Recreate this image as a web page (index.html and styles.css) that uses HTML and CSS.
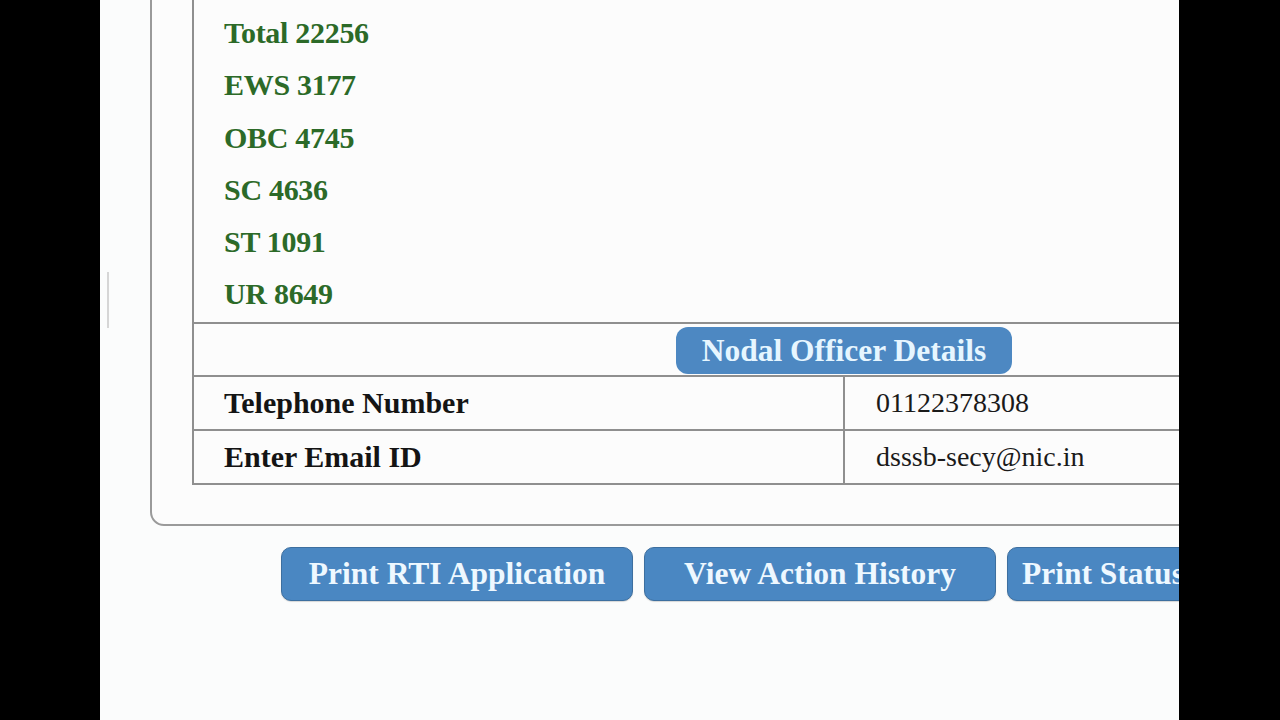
FILE: index.html
```html
<!DOCTYPE html>
<html>
<head>
<meta charset="utf-8">
<link rel="stylesheet" href="styles.css">
</head>
<body>
<div class="screen">
  <div class="bar-black"></div>
  <div class="page">
    <div class="artifact"></div>
    <div class="card">
      <table class="grid">
        <tr>
          <td colspan="2" class="vacancy">
            <ul class="counts">
              <li>Total 22256</li>
              <li>EWS 3177</li>
              <li>OBC 4745</li>
              <li>SC 4636</li>
              <li>ST 1091</li>
              <li>UR 8649</li>
            </ul>
          </td>
        </tr>
        <tr>
          <td colspan="2" class="head-cell"><span class="badge">Nodal Officer Details</span></td>
        </tr>
        <tr>
          <td class="label">Telephone Number</td>
          <td class="value">01122378308</td>
        </tr>
        <tr>
          <td class="label">Enter Email ID</td>
          <td class="value">dsssb-secy@nic.in</td>
        </tr>
      </table>
    </div>
    <div class="actions">
      <button class="btn">Print RTI Application</button>
      <button class="btn">View Action History</button>
      <button class="btn">Print Status</button>
    </div>
  </div>
  <div class="bar-black"></div>
</div>
</body>
</html>
```
FILE: styles.css
```css
html, body {
  margin: 0;
  padding: 0;
  background: #000;
}
.screen {
  display: flex;
  width: 1280px;
  height: 720px;
  overflow: hidden;
}
.bar-black {
  width: 100px;
  flex: none;
  background: #000;
}
.bar-black:last-child {
  width: 101px;
}
.page {
  position: relative;
  width: 1079px;
  flex: none;
  background: #fbfcfc;
  overflow: hidden;
  padding-left: 50px;
  box-sizing: border-box;
  font-family: "Liberation Serif", "DejaVu Serif", serif;
}
.artifact {
  position: absolute;
  left: 7px;
  top: 272px;
  width: 2px;
  height: 56px;
  background: #d6d6d6;
}
.card {
  width: 1400px;
  margin-top: -40px;
  padding: 0 0 39px 40px;
  border: 2px solid #9a9a9a;
  border-radius: 14px;
  box-sizing: border-box;
  background: #fcfcfc;
}
.grid {
  width: 1304px;
  border-collapse: collapse;
  table-layout: fixed;
}
.grid td {
  border: 2px solid #8f8f8f;
  padding: 0;
}
.grid tr:first-child td {
  border-top: none;
}
.vacancy {
  padding: 0;
}
.counts {
  list-style: none;
  margin: 0;
  padding: 45px 0 1px 30px;
}
.counts li {
  font-size: 30px;
  font-weight: bold;
  line-height: 52.3px;
  color: #2c6a28;
  letter-spacing: -0.3px;
}
.head-cell {
  height: 51px;
  text-align: center;
}
.badge {
  display: inline-block;
  width: 336px;
  height: 47px;
  line-height: 47px;
  margin-top: 2px;
  background: #4d88c2;
  border-radius: 12px;
  color: #e6f6ff;
  font-size: 31.5px;
  font-weight: bold;
  vertical-align: top;
}
.grid td.label {
  height: 52px;
  padding-left: 30px;
  font-size: 30px;
  font-weight: bold;
  color: #141414;
}
.grid td.value {
  padding-left: 31px;
  font-size: 28px;
  color: #1a1a1a;
}
.actions {
  display: flex;
  gap: 11px;
  margin: 21px 0 0 131px;
}
.btn {
  flex: none;
  width: 352px;
  height: 54px;
  border: 1px solid #3d6f9f;
  border-radius: 10px;
  background: #4a87c2;
  color: #eef8ff;
  font-family: "Liberation Serif", "DejaVu Serif", serif;
  font-size: 31.5px;
  font-weight: bold;
  padding: 0;
  text-align: center;
  box-shadow: 0 1px 1px rgba(0,0,0,0.15);
}
.btn:last-child {
  text-align: left;
  padding-left: 14px;
}
```
